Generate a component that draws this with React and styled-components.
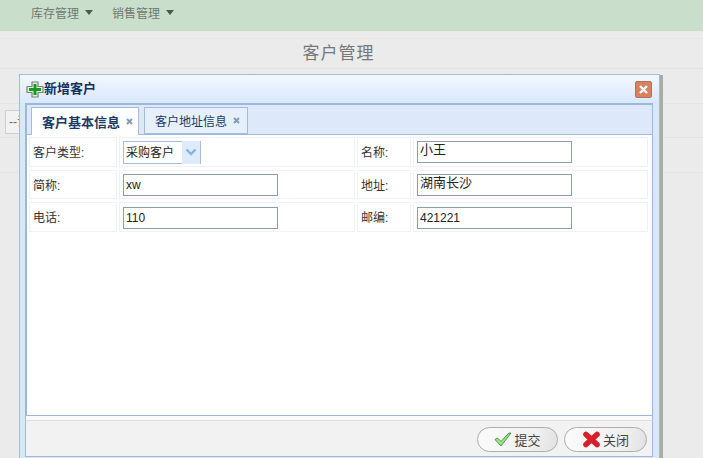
import React from "react";
import styled, { createGlobalStyle } from "styled-components";

const Global = createGlobalStyle`
  html, body { margin: 0; padding: 0; height: 100%; overflow: hidden; background: #ebebeb; }
  body { font-family: "Liberation Sans", "Noto Sans CJK SC", sans-serif; font-size: 12px; color: #333; }
`;
const Page = styled.div`position: relative; width: 703px; height: 458px; overflow: hidden; background: #ebebeb;`;
const TopBar = styled.div`height: 31px; background: #cadfcb; display: flex; align-items: center; padding: 0 0 7px 31px; gap: 19px; box-sizing: border-box;`;
const MenuItem = styled.div`display: flex; align-items: center; gap: 6px; color: #6f7a70; font-size: 12px;`;
const Caret = styled.span`width: 0; height: 0; border-left: 4.5px solid transparent; border-right: 4.5px solid transparent; border-top: 5px solid #4c5a4e;`;
const TitleRow = styled.div`margin-top: 7px; height: 31px; box-sizing: border-box; border-top: 1px solid #e6e6e6; border-bottom: 1px solid #e2e2e2; display: flex; justify-content: center; align-items: center; padding: 0 26px 5px 0; color: #777; font-size: 17px; letter-spacing: 1px;`;
const BackRow = styled.div`margin-top: 34px; height: 35px; border-top: 1px solid #e4e4e4; border-bottom: 1px solid #e4e4e4; padding: 6px 0 0 5px; box-sizing: border-box;`;
const BackInput = styled.div`width: 30px; height: 24px; background: #f2f2f2; border: 1px solid #cfcfcf; color: #666; line-height: 22px; padding-left: 3px; box-sizing: border-box; white-space: nowrap;`;
const BackLine = styled.div`height: 35px; border-bottom: 1px solid #e4e4e4; box-sizing: border-box;`;
const Dialog = styled.div`position: absolute; left: 19px; top: 74px; width: 641px; height: 384px; box-sizing: border-box; border: 1px solid #a3bcd9; border-bottom: none; background: #d9e7fb; box-shadow: 3px 1px 0 #aaa; display: flex; flex-direction: column; padding: 0 6px 0 5px;`;
const DialogHead = styled.div`height: 28px; margin: 0 -6px 0 -5px; padding: 0 7px 0 6px; box-sizing: border-box; background: linear-gradient(#f3f7fe, #d9e8fd); display: flex; align-items: center; color: #15315f; font-weight: bold; font-size: 13px; flex: none;`;
const HeadTitle = styled.span`flex: 1; margin-bottom: 4px;`;
const CloseBox = styled.div`width: 17px; height: 17px; border-radius: 2px; background: #d9805f; border: 1px solid #a8765f; box-sizing: border-box; display: flex; align-items: center; justify-content: center;`;
const Panel = styled.div`flex: 1; border: 1px solid #9db8d8; border-left-width: 2px; border-top-width: 2px; background: #fff; display: flex; flex-direction: column; min-height: 0;`;
const TabBar = styled.div`height: 30px; background: #dde9fb; border-bottom: 1px solid #a3bcd9; box-sizing: border-box; display: flex; align-items: flex-end; padding-left: 4px; gap: 5px; flex: none;`;
const Tab = styled.div`height: ${p => (p.$active ? "28px" : "27px")}; margin-bottom: ${p => (p.$active ? "-1px" : "0")}; background: ${p => (p.$active ? "#fff" : "#e6effc")}; border: 1px solid #a3bcd9; border-bottom: ${p => (p.$active ? "none" : "1px solid #a3bcd9")}; box-sizing: border-box; display: flex; align-items: center; padding: 0 ${p => (p.$active ? "5px" : "7px")} 0 10px; gap: 6px; color: #1d3a66; font-weight: ${p => (p.$active ? "bold" : "normal")}; font-size: ${p => (p.$active ? "13px" : "12px")};`;
const Form = styled.div`display: grid; grid-template-columns: 88px 236px 54px 235px; grid-template-rows: 30px 29px 30px; gap: 3px 2px; padding: 2px 0 0 2px;`;
const Label = styled.div`border: 1px solid #eef1f6; box-sizing: border-box; display: flex; align-items: center; padding: 0 0 1px 3px; color: #333; font-size: 12px;`;
const Field = styled.div`border: 1px solid #eef1f6; box-sizing: border-box; display: flex; align-items: center; padding: ${p => (p.$low ? "2px" : "0")} 0 0 3px;`;
const TextBox = styled.div`width: 155px; height: 22px; border: 1px solid #8b9daf; box-sizing: border-box; padding: 0 2px; line-height: ${p => (p.$cjk ? "15px" : "20px")}; font-size: ${p => (p.$cjk ? "13px" : "12px")}; color: #222; background: #fff;`;
const Select = styled.div`width: 78px; height: 23px; border: 1px solid #a5bfdc; box-sizing: border-box; display: flex; align-items: center; padding: 0 0 2px 2px; justify-content: space-between; color: #222;`;
const Arrow = styled.div`width: 18px; height: 23px; margin-bottom: -2px; background: #dfeafa; display: flex; align-items: center; justify-content: center;`;
const Spacer = styled.div`flex: 1;`;
const FooterGap = styled.div`height: 4px; flex: none; background: #fafafa; border: solid #9db8d8; border-width: 0 1px;`;
const Footer = styled.div`height: 37px; border: 1px solid #9db8d8; border-top: 1px solid #ddd; background: #f2f2f2; flex: none; display: flex; align-items: center; justify-content: flex-end; gap: 6px; padding: 2px 5px 0 0; box-sizing: border-box; margin-bottom: 1px;`;
const Pill = styled.div`width: ${p => p.$w}px; height: 25px; border-radius: 13px; border: 1px solid #adadad; box-sizing: border-box; background: linear-gradient(100deg, #fbfbfb, #f0f0f0 70%, #e2e2e2); display: flex; align-items: center; justify-content: center; gap: 2px; color: #444; font-size: 13px;`;

const Cross = () => (
  <svg width="18" height="17" viewBox="0 0 18 17">
    <path d="M6 1h6v4.5h5v6h-5V16H6v-4.5H1v-6h5z" fill="#e6efe2" stroke="#71856f" strokeWidth="1.2" strokeLinejoin="round" />
    <path d="M7.5 3h3v4h4.5v3h-4.5v4h-3v-4H3V7h4.5z" fill="#129a22" />
  </svg>
);
const TabX = () => (
  <svg width="7" height="7" viewBox="0 0 7 7">
    <path d="M1 1l5 5M6 1L1 6" stroke="#8499b8" strokeWidth="2" />
  </svg>
);
const Chevron = () => (
  <svg width="12" height="8" viewBox="0 0 12 8">
    <path d="M1.5 1.5L6 6l4.5-4.5" fill="none" stroke="#7fb8e0" strokeWidth="2.4" />
  </svg>
);
const WhiteX = () => (
  <svg width="11" height="11" viewBox="0 0 11 11">
    <path d="M2 2l7 7M9 2l-7 7" stroke="#fff" strokeWidth="2.4" />
  </svg>
);
const Check = () => (
  <svg width="18" height="15" viewBox="0 0 18 15">
    <path d="M1 7.5L3.5 6 7 9.5 15 1h2L7 14z" fill="#a9e08f" stroke="#3f9c48" strokeWidth="1" strokeLinejoin="round" />
  </svg>
);
const RedX = () => (
  <svg width="19" height="17" viewBox="0 0 19 17">
    <path d="M4 3.5l11 10M15 3.5l-11 10" stroke="#d8202a" strokeWidth="5.6" strokeLinecap="round" />
  </svg>
);

export default function App() {
  return (
    <Page>
      <Global />
      <TopBar>
        <MenuItem>库存管理<Caret /></MenuItem>
        <MenuItem>销售管理<Caret /></MenuItem>
      </TopBar>
      <TitleRow>客户管理</TitleRow>
      <BackRow><BackInput>--请</BackInput></BackRow>
      <BackLine />
      <Dialog>
        <DialogHead>
          <Cross />
          <HeadTitle>新增客户</HeadTitle>
          <CloseBox><WhiteX /></CloseBox>
        </DialogHead>
        <Panel>
          <TabBar>
            <Tab $active>客户基本信息<TabX /></Tab>
            <Tab>客户地址信息<TabX /></Tab>
          </TabBar>
          <Form>
            <Label>客户类型:</Label>
            <Field><Select>采购客户<Arrow><Chevron /></Arrow></Select></Field>
            <Label>名称:</Label>
            <Field><TextBox $cjk>小王</TextBox></Field>
            <Label>简称:</Label>
            <Field><TextBox>xw</TextBox></Field>
            <Label>地址:</Label>
            <Field><TextBox $cjk>湖南长沙</TextBox></Field>
            <Label>电话:</Label>
            <Field $low><TextBox>110</TextBox></Field>
            <Label>邮编:</Label>
            <Field $low><TextBox>421221</TextBox></Field>
          </Form>
          <Spacer />
        </Panel>
        <FooterGap />
        <Footer>
          <Pill $w={81}><Check />提交</Pill>
          <Pill $w={83}><RedX />关闭</Pill>
        </Footer>
      </Dialog>
    </Page>
  );
}
